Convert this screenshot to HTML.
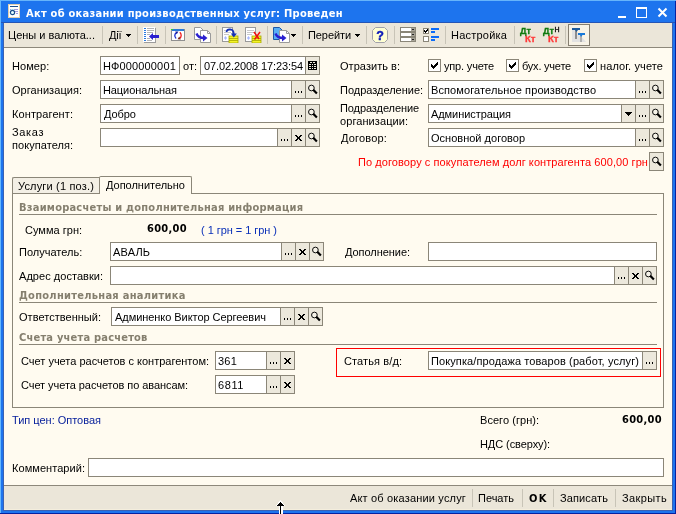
<!DOCTYPE html><html lang="ru"><head><meta charset="utf-8"><title>Акт об оказании производственных услуг</title><style>

html,body{margin:0;padding:0}
body{width:676px;height:514px;overflow:hidden;background:#1d74ee;position:relative;font-family:"Liberation Sans", sans-serif;font-size:11px;color:#000}
div,span,svg{position:absolute;box-sizing:border-box}
.t{white-space:pre;line-height:13px;height:13px}
.b{font-weight:bold;font-family:"DejaVu Sans Condensed","Liberation Sans",sans-serif} .w{color:#fff} .r{color:#ff0000} .g{color:#857f6e} .bl{color:#0a30b8} .bl2{color:#0a229c}
.in{background:#fff;border:1px solid #8b8678;height:19px}
.bt{background:#ece8dc;border-left:1px solid #8b8678;width:14px;height:17px;top:0}
.sep{width:1px;background:#c8c4b7}
.hl{height:1px;background:#8b8678}
.cb{width:13px;height:13px;background:#fff;border:1px solid #8b8678}

</style></head><body>
<div id="tx" style="left:0;top:0;width:676px;height:514px;will-change:transform">
<div style="left:0;top:0;width:676px;height:23px;background:#1d74ee"></div>
<div style="left:0;top:0;width:676px;height:1px;background:#66b4fb"></div>
<div style="left:0;top:22px;width:676px;height:1px;background:#2455b5"></div>
<div style="left:0;top:1px;width:1px;height:513px;background:#66b8fd"></div>
<div style="left:3px;top:23px;width:1px;height:488px;background:#3a62b2"></div>
<div style="left:672px;top:23px;width:1px;height:488px;background:#3a62b2"></div>
<div style="left:3px;top:510px;width:670px;height:1px;background:#3a62b2"></div>
<div style="left:675px;top:1px;width:1px;height:513px;background:#0422a2"></div>
<div style="left:0;top:513px;width:676px;height:1px;background:#0422a2"></div>
<div style="left:4px;top:23px;width:668px;height:487px;background:#fffbf0"></div>
<div style="left:4px;top:23px;width:668px;height:24px;background:#ebe6d9"></div>
<div style="left:4px;top:47px;width:668px;height:1px;background:#8d887b"></div>
<div style="left:4px;top:485px;width:668px;height:1px;background:#8d887b"></div>
<div style="left:4px;top:486px;width:668px;height:24px;background:#ebe6d9"></div>
<div style="left:4px;top:509px;width:668px;height:1px;background:#f4eedd"></div>
<svg style="left:8px;top:4px" width="12" height="14" viewBox="0 0 12 14"><rect x="0.5" y="0.5" width="11" height="13" fill="#fff" stroke="#e2cfae"/><rect x="2" y="2" width="8" height="1" fill="#1c4f8c"/><rect x="2" y="5" width="1" height="1" fill="#a098e0"/><rect x="3" y="5" width="3" height="1" fill="#b8f0f0"/><rect x="6" y="5" width="4" height="1" fill="#a098e0"/><rect x="7" y="7" width="3" height="1" fill="#a098e0"/><rect x="8" y="9" width="2" height="1" fill="#a098e0"/><circle cx="4.5" cy="8.5" r="2.1" fill="#e8ffff" stroke="#1c4f8c" stroke-width="1.2"/></svg>
<div style="left:618px;top:16px;width:8px;height:2px;background:#fff"></div>
<div style="left:636px;top:7px;width:11px;height:11px;border:1px solid #fff;border-top-width:2px"></div>
<svg style="left:657px;top:7px" width="11" height="11" viewBox="0 0 11 11"><path d="M1.5 1.5 L9.5 9.5 M9.5 1.5 L1.5 9.5" stroke="#fff" stroke-width="2"/></svg>
<div class="sep" style="left:102px;top:26px;height:18px"></div>
<div class="sep" style="left:137px;top:26px;height:18px"></div>
<div class="sep" style="left:165px;top:26px;height:18px"></div>
<div class="sep" style="left:216px;top:26px;height:18px"></div>
<div class="sep" style="left:267px;top:26px;height:18px"></div>
<div class="sep" style="left:302px;top:26px;height:18px"></div>
<div class="sep" style="left:366px;top:26px;height:18px"></div>
<div class="sep" style="left:394px;top:26px;height:18px"></div>
<div class="sep" style="left:445px;top:26px;height:18px"></div>
<div class="sep" style="left:514px;top:26px;height:18px"></div>
<div class="sep" style="left:565px;top:26px;height:18px"></div>
<svg style="left:126px;top:34px" width="5" height="3" viewBox="0 0 5 3" shape-rendering="crispEdges"><polygon points="0,0 5,0 2.5,3" fill="#000"/></svg>
<svg style="left:291px;top:34px" width="5" height="3" viewBox="0 0 5 3" shape-rendering="crispEdges"><polygon points="0,0 5,0 2.5,3" fill="#000"/></svg>
<svg style="left:355px;top:34px" width="5" height="3" viewBox="0 0 5 3" shape-rendering="crispEdges"><polygon points="0,0 5,0 2.5,3" fill="#000"/></svg>
<svg style="left:143px;top:27px" width="17" height="16" viewBox="0 0 17 16" shape-rendering="crispEdges"><rect x="1" y="1" width="12" height="15" fill="#9c9c9c"/><rect x="0" y="0" width="12" height="15" fill="#fff"/><g fill="#2a7be0"><rect x="1" y="1" width="2" height="1"/><rect x="1" y="3" width="2" height="1"/><rect x="1" y="5" width="2" height="1"/><rect x="1" y="7" width="2" height="1"/><rect x="1" y="9" width="2" height="1"/><rect x="1" y="11" width="2" height="1"/><rect x="1" y="13" width="2" height="1"/></g><g fill="#b4b4b4"><rect x="4" y="1" width="7" height="1"/><rect x="4" y="3" width="7" height="1"/><rect x="4" y="5" width="6" height="1"/><rect x="4" y="7" width="3" height="1"/><rect x="4" y="11" width="3" height="1"/><rect x="4" y="13" width="5" height="1"/></g><polygon points="6,9.5 10,6 10,8 16,8 16,11 10,11 10,13" fill="#2a1fd0" shape-rendering="auto"/></svg>
<svg style="left:171px;top:29px" width="14" height="12" viewBox="0 0 14 12"><rect x="0.5" y="0.5" width="13" height="11" fill="#fff" stroke="#909090"/><rect x="1" y="0" width="12" height="2" fill="#2b7ad6"/><rect x="0" y="0" width="2" height="1" fill="#30d030"/><path d="M5.6 3.6 C3.4 4.6 3.2 8 5.2 9.6" fill="none" stroke="#1626cc" stroke-width="1.3"/><polygon points="4.2,2.4 7.4,2.6 5.8,5.2" fill="#101898"/><path d="M8.4 9.4 C10.6 8.4 10.8 5 8.8 3.2" fill="none" stroke="#f01818" stroke-width="1.3"/><polygon points="9.8,10.4 6.6,10.2 8.2,7.6" fill="#7a2a18"/></svg>
<svg style="left:194px;top:27px" width="17" height="16" viewBox="0 0 17 16"><path d="M0.5 0.5 H6.5 L9.5 3.5 V12.5 H0.5 Z" fill="#fff" stroke="#9a9a9a"/><path d="M6.5 3.5 H13.5 L16.5 6.5 V15.5 H6.5 Z" fill="#fff" stroke="#9a9a9a"/><path d="M13.5 3.5 V6.5 H16.5" fill="none" stroke="#9a9a9a"/><path d="M2.5 6.5 C4 10.5 7 11 10 11" fill="none" stroke="#2a1fd0" stroke-width="2.4"/><polygon points="9,7.5 13.5,11 9,14.5" fill="#2a1fd0"/></svg>
<svg style="left:222px;top:27px" width="17" height="16" viewBox="0 0 17 16"><rect x="0.5" y="0.5" width="10" height="14" fill="#fff" stroke="#9a9a9a"/><g fill="#c8c8c8"><rect x="2" y="3" width="7" height="1"/><rect x="2" y="5" width="7" height="1"/><rect x="2" y="7" width="5" height="1"/></g><polygon points="3.5,9 5,11 3.5,13 2,11" fill="#a8b8ff"/><rect x="7" y="9" width="9" height="7" fill="#f4f428" stroke="#a8a800" stroke-width="0.8"/><g fill="#a8a800"><rect x="7" y="11" width="9" height="0.8"/><rect x="7" y="13" width="9" height="0.8"/></g><path d="M4.5 5 C5 1.5 11.5 1 11.8 7" fill="none" stroke="#1430b8" stroke-width="1.7"/><polygon points="8.8,6.6 14.8,6.6 11.8,10.6" fill="#1430b8"/></svg>
<svg style="left:245px;top:27px" width="17" height="16" viewBox="0 0 17 16"><rect x="0.5" y="0.5" width="10" height="14" fill="#fff" stroke="#9a9a9a"/><g fill="#c8c8c8"><rect x="2" y="3" width="7" height="1"/><rect x="2" y="5" width="7" height="1"/><rect x="2" y="7" width="5" height="1"/></g><polygon points="3.5,9 5,11 3.5,13 2,11" fill="#a8b8ff"/><rect x="7" y="9" width="9" height="7" fill="#f4f428" stroke="#a8a800" stroke-width="0.8"/><g fill="#a8a800"><rect x="7" y="11" width="9" height="0.8"/><rect x="7" y="13" width="9" height="0.8"/></g><path d="M9 5 L14 12 M15 5 L9.5 12.5" fill="none" stroke="#f01010" stroke-width="1.5"/></svg>
<svg style="left:273px;top:27px" width="17" height="16" viewBox="0 0 17 16"><path d="M0.5 0.5 H6.5 L9.5 3.5 V12.5 H0.5 Z" fill="#58aef4" stroke="#1c58a8"/><path d="M6.5 3.5 H13.5 L16.5 6.5 V15.5 H6.5 Z" fill="#fff" stroke="#9a9a9a"/><path d="M13.5 3.5 V6.5 H16.5" fill="none" stroke="#9a9a9a"/><path d="M2.5 6.5 C4 10.5 7 11 10 11" fill="none" stroke="#2a1fd0" stroke-width="2.4"/><polygon points="9,7.5 13.5,11 9,14.5" fill="#2a1fd0"/></svg>
<svg style="left:372px;top:27px" width="16" height="16" viewBox="0 0 16 16"><polygon points="3.5,0.5 12.5,0.5 15.5,3.5 15.5,12.5 12.5,15.5 3.5,15.5 0.5,12.5 0.5,3.5" fill="#ffffd2" stroke="#a2a2aa"/><text x="8" y="12.6" text-anchor="middle" font-family="Liberation Sans, sans-serif" font-weight="bold" font-size="12.5" fill="#0818b8" stroke="#0818b8" stroke-width="0.4">?</text></svg>
<svg style="left:400px;top:27px" width="16" height="15" viewBox="0 0 16 15" shape-rendering="crispEdges"><g fill="#fff" stroke="#8a8678"><rect x="0.5" y="0.5" width="15" height="4"/><rect x="0.5" y="5.5" width="15" height="4"/><rect x="0.5" y="10.5" width="15" height="4"/></g><g fill="#a8a498"><rect x="11" y="1" width="4" height="3"/><rect x="11" y="6" width="4" height="3"/><rect x="11" y="11" width="4" height="3"/></g><g fill="#222"><rect x="12" y="2" width="2" height="1"/><rect x="12" y="7" width="2" height="1"/><rect x="12" y="12" width="2" height="1"/></g></svg>
<svg style="left:423px;top:28px" width="17" height="14" viewBox="0 0 17 14" shape-rendering="crispEdges"><rect x="0.5" y="0.5" width="5" height="5" fill="#fff" stroke="#8a8678"/><path d="M1 2h1v1h1v-1h1v-1h1v2h-1v1h-1v1h-1v-1h-1z" fill="#000"/><rect x="0.5" y="8.5" width="5" height="5" fill="#fff" stroke="#8a8678"/><g fill="#0c6cf8"><rect x="8" y="0" width="8" height="2"/><rect x="8" y="3" width="4" height="2"/><rect x="8" y="8" width="8" height="2"/><rect x="8" y="11" width="4" height="2"/></g></svg>
<svg style="left:518px;top:25px" width="44" height="20" viewBox="0 0 44 20"><g font-family="Liberation Sans, sans-serif" font-weight="bold" font-size="8.6"><text x="2" y="8.6" fill="#0f7a0f" stroke="#0f7a0f" stroke-width="0.3" textLength="11" lengthAdjust="spacingAndGlyphs">Дт</text><text x="7" y="16.8" fill="#ff3a3a" stroke="#ff3a3a" stroke-width="0.3" textLength="10.5" lengthAdjust="spacingAndGlyphs">Кт</text><text x="25" y="8.6" fill="#0f7a0f" stroke="#0f7a0f" stroke-width="0.3" textLength="11" lengthAdjust="spacingAndGlyphs">Дт</text><text x="30" y="16.8" fill="#ff3a3a" stroke="#ff3a3a" stroke-width="0.3" textLength="10.5" lengthAdjust="spacingAndGlyphs">Кт</text><text x="36.6" y="6.8" fill="#000" font-size="7" font-weight="normal" stroke="#000" stroke-width="0.3">Н</text></g></svg>
<div style="left:568px;top:24px;width:22px;height:22px;border:1px solid #857e70;background:#f8f3e6"></div>
<svg style="left:571px;top:27px" width="16" height="16" viewBox="0 0 16 16"><polygon points="1,2 1,15 15,15 9,8 9,9 5,3" fill="#e2e2e2"/><rect x="4" y="3" width="2" height="9" fill="#8e8e8e"/><rect x="9" y="8" width="2" height="7" fill="#b0b0b0"/><polygon points="1,1 9,1 9,3 7,3 5.5,5 4,3 1,3" fill="#1c5a9c"/><polygon points="7,6 14,6 14,8 11.5,8 10,10 9,8 7,8" fill="#1878d8"/></svg>

<div class="in" style="left:100px;top:56px;width:80px"></div>
<div class="in" style="left:200px;top:56px;width:120px"><div class="bt" style="left:104px"><svg style="left:0;top:0" width="13" height="17" viewBox="0 0 13 17" shape-rendering="crispEdges"><rect x="2" y="4" width="9" height="9" fill="#000"/><rect x="4" y="5" width="2" height="1" fill="#ece8dc"/><rect x="7" y="5" width="2" height="1" fill="#ece8dc"/><rect x="3" y="7" width="2" height="1" fill="#ece8dc"/><rect x="6" y="7" width="1" height="1" fill="#ece8dc"/><rect x="8" y="7" width="2" height="1" fill="#ece8dc"/><rect x="3" y="9" width="2" height="1" fill="#ece8dc"/><rect x="6" y="9" width="1" height="1" fill="#ece8dc"/><rect x="8" y="9" width="2" height="1" fill="#ece8dc"/><rect x="3" y="11" width="2" height="1" fill="#ece8dc"/><rect x="6" y="11" width="1" height="1" fill="#ece8dc"/><rect x="8" y="11" width="2" height="1" fill="#ece8dc"/></svg></div></div>
<div class="in" style="left:100px;top:80px;width:220px"><div class="bt" style="left:190px"><svg style="left:0;top:0" width="13" height="17" viewBox="0 0 13 17" shape-rendering="crispEdges"><rect x="3" y="10" width="1" height="2"/><rect x="6" y="10" width="1" height="2"/><rect x="9" y="10" width="1" height="2"/></svg></div><div class="bt" style="left:204px"><svg style="left:0;top:0" width="13" height="17" viewBox="0 0 13 17"><circle cx="5.4" cy="7" r="2.85" fill="#f5f2e8" stroke="#000" stroke-width="0.95"/><path d="M8 9.6 L10.1 11.7" stroke="#000" stroke-width="2.2" stroke-linecap="square"/></svg></div></div>
<div class="in" style="left:100px;top:104px;width:220px"><div class="bt" style="left:190px"><svg style="left:0;top:0" width="13" height="17" viewBox="0 0 13 17" shape-rendering="crispEdges"><rect x="3" y="10" width="1" height="2"/><rect x="6" y="10" width="1" height="2"/><rect x="9" y="10" width="1" height="2"/></svg></div><div class="bt" style="left:204px"><svg style="left:0;top:0" width="13" height="17" viewBox="0 0 13 17"><circle cx="5.4" cy="7" r="2.85" fill="#f5f2e8" stroke="#000" stroke-width="0.95"/><path d="M8 9.6 L10.1 11.7" stroke="#000" stroke-width="2.2" stroke-linecap="square"/></svg></div></div>
<div class="in" style="left:100px;top:128px;width:220px"><div class="bt" style="left:176px"><svg style="left:0;top:0" width="13" height="17" viewBox="0 0 13 17" shape-rendering="crispEdges"><rect x="3" y="10" width="1" height="2"/><rect x="6" y="10" width="1" height="2"/><rect x="9" y="10" width="1" height="2"/></svg></div><div class="bt" style="left:190px"><svg style="left:0;top:0" width="13" height="17" viewBox="0 0 13 17" shape-rendering="crispEdges"><path d="M3 6h2v1h1v1h1v-1h1v-1h2v1h-1v1h-1v2h1v1h1v1h-2v-1h-1v-1h-1v1h-1v1h-2v-1h1v-1h1v-2h-1v-1h-1z"/></svg></div><div class="bt" style="left:204px"><svg style="left:0;top:0" width="13" height="17" viewBox="0 0 13 17"><circle cx="5.4" cy="7" r="2.85" fill="#f5f2e8" stroke="#000" stroke-width="0.95"/><path d="M8 9.6 L10.1 11.7" stroke="#000" stroke-width="2.2" stroke-linecap="square"/></svg></div></div>
<div class="in" style="left:428px;top:80px;width:236px"><div class="bt" style="left:206px"><svg style="left:0;top:0" width="13" height="17" viewBox="0 0 13 17" shape-rendering="crispEdges"><rect x="3" y="10" width="1" height="2"/><rect x="6" y="10" width="1" height="2"/><rect x="9" y="10" width="1" height="2"/></svg></div><div class="bt" style="left:220px"><svg style="left:0;top:0" width="13" height="17" viewBox="0 0 13 17"><circle cx="5.4" cy="7" r="2.85" fill="#f5f2e8" stroke="#000" stroke-width="0.95"/><path d="M8 9.6 L10.1 11.7" stroke="#000" stroke-width="2.2" stroke-linecap="square"/></svg></div></div>
<div class="in" style="left:428px;top:104px;width:236px"><div class="bt" style="left:192px"><svg style="left:0;top:0" width="13" height="17" viewBox="0 0 13 17" shape-rendering="crispEdges"><rect x="3" y="7" width="7" height="1"/><rect x="4" y="8" width="5" height="1"/><rect x="5" y="9" width="3" height="1"/><rect x="6" y="10" width="1" height="1"/></svg></div><div class="bt" style="left:206px"><svg style="left:0;top:0" width="13" height="17" viewBox="0 0 13 17" shape-rendering="crispEdges"><rect x="3" y="10" width="1" height="2"/><rect x="6" y="10" width="1" height="2"/><rect x="9" y="10" width="1" height="2"/></svg></div><div class="bt" style="left:220px"><svg style="left:0;top:0" width="13" height="17" viewBox="0 0 13 17"><circle cx="5.4" cy="7" r="2.85" fill="#f5f2e8" stroke="#000" stroke-width="0.95"/><path d="M8 9.6 L10.1 11.7" stroke="#000" stroke-width="2.2" stroke-linecap="square"/></svg></div></div>
<div class="in" style="left:428px;top:128px;width:236px"><div class="bt" style="left:206px"><svg style="left:0;top:0" width="13" height="17" viewBox="0 0 13 17" shape-rendering="crispEdges"><rect x="3" y="10" width="1" height="2"/><rect x="6" y="10" width="1" height="2"/><rect x="9" y="10" width="1" height="2"/></svg></div><div class="bt" style="left:220px"><svg style="left:0;top:0" width="13" height="17" viewBox="0 0 13 17"><circle cx="5.4" cy="7" r="2.85" fill="#f5f2e8" stroke="#000" stroke-width="0.95"/><path d="M8 9.6 L10.1 11.7" stroke="#000" stroke-width="2.2" stroke-linecap="square"/></svg></div></div>
<div class="in" style="left:649px;top:152px;width:15px;background:#ece8dc"><svg style="left:0;top:0" width="13" height="17" viewBox="0 0 13 17"><circle cx="5.4" cy="7" r="2.85" fill="#f5f2e8" stroke="#000" stroke-width="0.95"/><path d="M8 9.6 L10.1 11.7" stroke="#000" stroke-width="2.2" stroke-linecap="square"/></svg></div>
<div class="cb" style="left:428px;top:59px"><svg style="left:2px;top:2px" width="7" height="7" viewBox="0 0 7 7" shape-rendering="crispEdges"><path d="M0 2v3h1v1h1v1h1v-1h1v-1h1v-1h1v-1h1v-3h-1v1h-1v1h-1v1h-1v1h-1v-1h-1v-1z"/></svg></div>
<div class="cb" style="left:506px;top:59px"><svg style="left:2px;top:2px" width="7" height="7" viewBox="0 0 7 7" shape-rendering="crispEdges"><path d="M0 2v3h1v1h1v1h1v-1h1v-1h1v-1h1v-1h1v-3h-1v1h-1v1h-1v1h-1v1h-1v-1h-1v-1z"/></svg></div>
<div class="cb" style="left:584px;top:59px"><svg style="left:2px;top:2px" width="7" height="7" viewBox="0 0 7 7" shape-rendering="crispEdges"><path d="M0 2v3h1v1h1v1h1v-1h1v-1h1v-1h1v-1h1v-3h-1v1h-1v1h-1v1h-1v1h-1v-1h-1v-1z"/></svg></div>
<div style="left:12px;top:193px;width:652px;height:215px;border:1px solid #8b8678"></div>
<div style="left:12px;top:177px;width:88px;height:17px;border:1px solid #8b8678;border-right:0;background:#f3efe5;border-top-left-radius:2px"></div>
<div style="left:99px;top:176px;width:93px;height:18px;border:1px solid #8b8678;border-bottom:0;background:#fffbf0;border-top-left-radius:2px;border-top-right-radius:2px"></div>
<div class="hl" style="left:19px;top:214px;width:638px"></div>
<div class="hl" style="left:19px;top:302px;width:638px"></div>
<div class="hl" style="left:19px;top:344px;width:638px"></div>
<div class="in" style="left:110px;top:242px;width:214px"><div class="bt" style="left:170px"><svg style="left:0;top:0" width="13" height="17" viewBox="0 0 13 17" shape-rendering="crispEdges"><rect x="3" y="10" width="1" height="2"/><rect x="6" y="10" width="1" height="2"/><rect x="9" y="10" width="1" height="2"/></svg></div><div class="bt" style="left:184px"><svg style="left:0;top:0" width="13" height="17" viewBox="0 0 13 17" shape-rendering="crispEdges"><path d="M3 6h2v1h1v1h1v-1h1v-1h2v1h-1v1h-1v2h1v1h1v1h-2v-1h-1v-1h-1v1h-1v1h-2v-1h1v-1h1v-2h-1v-1h-1z"/></svg></div><div class="bt" style="left:198px"><svg style="left:0;top:0" width="13" height="17" viewBox="0 0 13 17"><circle cx="5.4" cy="7" r="2.85" fill="#f5f2e8" stroke="#000" stroke-width="0.95"/><path d="M8 9.6 L10.1 11.7" stroke="#000" stroke-width="2.2" stroke-linecap="square"/></svg></div></div>
<div class="in" style="left:428px;top:242px;width:229px"></div>
<div class="in" style="left:110px;top:266px;width:547px"><div class="bt" style="left:503px"><svg style="left:0;top:0" width="13" height="17" viewBox="0 0 13 17" shape-rendering="crispEdges"><rect x="3" y="10" width="1" height="2"/><rect x="6" y="10" width="1" height="2"/><rect x="9" y="10" width="1" height="2"/></svg></div><div class="bt" style="left:517px"><svg style="left:0;top:0" width="13" height="17" viewBox="0 0 13 17" shape-rendering="crispEdges"><path d="M3 6h2v1h1v1h1v-1h1v-1h2v1h-1v1h-1v2h1v1h1v1h-2v-1h-1v-1h-1v1h-1v1h-2v-1h1v-1h1v-2h-1v-1h-1z"/></svg></div><div class="bt" style="left:531px"><svg style="left:0;top:0" width="13" height="17" viewBox="0 0 13 17"><circle cx="5.4" cy="7" r="2.85" fill="#f5f2e8" stroke="#000" stroke-width="0.95"/><path d="M8 9.6 L10.1 11.7" stroke="#000" stroke-width="2.2" stroke-linecap="square"/></svg></div></div>
<div class="in" style="left:111px;top:307px;width:212px"><div class="bt" style="left:168px"><svg style="left:0;top:0" width="13" height="17" viewBox="0 0 13 17" shape-rendering="crispEdges"><rect x="3" y="10" width="1" height="2"/><rect x="6" y="10" width="1" height="2"/><rect x="9" y="10" width="1" height="2"/></svg></div><div class="bt" style="left:182px"><svg style="left:0;top:0" width="13" height="17" viewBox="0 0 13 17" shape-rendering="crispEdges"><path d="M3 6h2v1h1v1h1v-1h1v-1h2v1h-1v1h-1v2h1v1h1v1h-2v-1h-1v-1h-1v1h-1v1h-2v-1h1v-1h1v-2h-1v-1h-1z"/></svg></div><div class="bt" style="left:196px"><svg style="left:0;top:0" width="13" height="17" viewBox="0 0 13 17"><circle cx="5.4" cy="7" r="2.85" fill="#f5f2e8" stroke="#000" stroke-width="0.95"/><path d="M8 9.6 L10.1 11.7" stroke="#000" stroke-width="2.2" stroke-linecap="square"/></svg></div></div>
<div class="in" style="left:215px;top:351px;width:80px"><div class="bt" style="left:50px"><svg style="left:0;top:0" width="13" height="17" viewBox="0 0 13 17" shape-rendering="crispEdges"><rect x="3" y="10" width="1" height="2"/><rect x="6" y="10" width="1" height="2"/><rect x="9" y="10" width="1" height="2"/></svg></div><div class="bt" style="left:64px"><svg style="left:0;top:0" width="13" height="17" viewBox="0 0 13 17" shape-rendering="crispEdges"><path d="M3 6h2v1h1v1h1v-1h1v-1h2v1h-1v1h-1v2h1v1h1v1h-2v-1h-1v-1h-1v1h-1v1h-2v-1h1v-1h1v-2h-1v-1h-1z"/></svg></div></div>
<div class="in" style="left:215px;top:375px;width:80px"><div class="bt" style="left:50px"><svg style="left:0;top:0" width="13" height="17" viewBox="0 0 13 17" shape-rendering="crispEdges"><rect x="3" y="10" width="1" height="2"/><rect x="6" y="10" width="1" height="2"/><rect x="9" y="10" width="1" height="2"/></svg></div><div class="bt" style="left:64px"><svg style="left:0;top:0" width="13" height="17" viewBox="0 0 13 17" shape-rendering="crispEdges"><path d="M3 6h2v1h1v1h1v-1h1v-1h2v1h-1v1h-1v2h1v1h1v1h-2v-1h-1v-1h-1v1h-1v1h-2v-1h1v-1h1v-2h-1v-1h-1z"/></svg></div></div>
<div style="left:336px;top:348px;width:325px;height:29px;border:1px solid #ff0000"></div>
<div class="in" style="left:428px;top:351px;width:229px"><div class="bt" style="left:213px"><svg style="left:0;top:0" width="13" height="17" viewBox="0 0 13 17" shape-rendering="crispEdges"><rect x="3" y="10" width="1" height="2"/><rect x="6" y="10" width="1" height="2"/><rect x="9" y="10" width="1" height="2"/></svg></div></div>
<div class="in" style="left:88px;top:458px;width:576px"></div>
<div class="sep" style="left:472px;top:489px;height:18px"></div>
<div class="sep" style="left:522px;top:489px;height:18px"></div>
<div class="sep" style="left:553px;top:489px;height:18px"></div>
<div class="sep" style="left:615px;top:489px;height:18px"></div>
<svg style="left:275px;top:500px" width="11" height="14" viewBox="0 0 11 14" shape-rendering="crispEdges"><polygon points="5.5,0 10.5,6 7.5,6 7.5,14 3.5,14 3.5,6 0.5,6" fill="#fff"/><polygon points="5.5,1.5 9,5.5 2,5.5" fill="#000"/><rect x="5" y="5" width="1" height="9" fill="#000"/></svg>
<span id="t0" class="t b w" style="left:26px;top:7px;letter-spacing:0.261px">Акт об оказании производственных услуг: Проведен</span>
<span id="t1" class="t " style="left:8px;top:29px;letter-spacing:0.002px">Цены и валюта...</span>
<span id="t2" class="t " style="left:109px;top:29px;letter-spacing:-0.151px">Дії</span>
<span id="t3" class="t " style="left:308px;top:29px;letter-spacing:-0.085px">Перейти</span>
<span id="t4" class="t " style="left:451px;top:29px;letter-spacing:0.219px">Настройка</span>
<span id="t5" class="t " style="left:12px;top:60px;letter-spacing:0.080px">Номер:</span>
<span id="t6" class="t " style="left:12px;top:84px;letter-spacing:0.057px">Организация:</span>
<span id="t7" class="t " style="left:12px;top:108px;letter-spacing:0.106px">Контрагент:</span>
<span id="t8" class="t " style="left:12px;top:126px;letter-spacing:0.678px">Заказ</span>
<span id="t9" class="t " style="left:12px;top:139px;letter-spacing:0.059px">покупателя:</span>
<span id="t10" class="t " style="left:183px;top:60px;letter-spacing:0.005px">от:</span>
<span id="t11" class="t " style="left:103px;top:60px;letter-spacing:0.139px">НФ000000001</span>
<span id="t12" class="t " style="left:204px;top:60px;letter-spacing:-0.102px">07.02.2008 17:23:54</span>
<span id="t13" class="t " style="left:103px;top:84px;letter-spacing:-0.094px">Национальная</span>
<span id="t14" class="t " style="left:104px;top:108px;letter-spacing:-0.097px">Добро</span>
<span id="t15" class="t " style="left:340px;top:60px;letter-spacing:0.043px">Отразить в:</span>
<span id="t16" class="t " style="left:444px;top:60px;letter-spacing:-0.170px">упр. учете</span>
<span id="t17" class="t " style="left:522px;top:60px;letter-spacing:-0.219px">бух. учете</span>
<span id="t18" class="t " style="left:600px;top:60px;letter-spacing:0.120px">налог. учете</span>
<span id="t19" class="t " style="left:340px;top:84px;letter-spacing:-0.010px">Подразделение:</span>
<span id="t20" class="t " style="left:340px;top:102px;letter-spacing:-0.089px">Подразделение</span>
<span id="t21" class="t " style="left:340px;top:115px;letter-spacing:0.078px">организации:</span>
<span id="t22" class="t " style="left:341px;top:132px;letter-spacing:0.176px">Договор:</span>
<span id="t23" class="t " style="left:431px;top:84px;letter-spacing:0.105px">Вспомогательное производство</span>
<span id="t24" class="t " style="left:431px;top:108px;letter-spacing:-0.072px">Администрация</span>
<span id="t25" class="t " style="left:431px;top:132px;letter-spacing:0.012px">Основной договор</span>
<span id="t26" class="t r" style="left:358px;top:156px;letter-spacing:0.080px">По договору с покупателем долг контрагента 600,00 грн</span>
<span id="t27" class="t " style="left:18px;top:180px;letter-spacing:0.176px">Услуги (1 поз.)</span>
<span id="t28" class="t " style="left:106px;top:179px;letter-spacing:-0.019px">Дополнительно</span>
<span id="t29" class="t b g" style="left:19px;top:201px;letter-spacing:0.227px">Взаиморасчеты и дополнительная информация</span>
<span id="t30" class="t " style="left:25px;top:224px;letter-spacing:0.022px">Сумма грн:</span>
<span id="t31" class="t b" style="left:147px;top:222px;letter-spacing:0.291px">600,00</span>
<span id="t32" class="t bl" style="left:201px;top:224px;letter-spacing:-0.044px">( 1 грн = 1 грн )</span>
<span id="t33" class="t " style="left:19px;top:246px;letter-spacing:0.001px">Получатель:</span>
<span id="t34" class="t " style="left:113px;top:246px;letter-spacing:0.184px">АВАЛЬ</span>
<span id="t35" class="t " style="left:345px;top:246px;letter-spacing:-0.048px">Дополнение:</span>
<span id="t36" class="t " style="left:19px;top:270px;letter-spacing:0.040px">Адрес доставки:</span>
<span id="t37" class="t b g" style="left:19px;top:289px;letter-spacing:0.276px">Дополнительная аналитика</span>
<span id="t38" class="t " style="left:19px;top:311px;letter-spacing:0.032px">Ответственный:</span>
<span id="t39" class="t " style="left:115px;top:311px;letter-spacing:-0.056px">Админенко Виктор Сергеевич</span>
<span id="t40" class="t b g" style="left:19px;top:331px;letter-spacing:0.209px">Счета учета расчетов</span>
<span id="t41" class="t " style="left:21px;top:355px;letter-spacing:-0.002px">Счет учета расчетов с контрагентом:</span>
<span id="t42" class="t " style="left:218px;top:355px;letter-spacing:0.214px">361</span>
<span id="t43" class="t " style="left:21px;top:379px;letter-spacing:-0.061px">Счет учета расчетов по авансам:</span>
<span id="t44" class="t " style="left:218px;top:379px;letter-spacing:0.586px">6811</span>
<span id="t45" class="t " style="left:344px;top:355px;letter-spacing:0.110px">Статья в/д:</span>
<span id="t46" class="t " style="left:431px;top:355px;letter-spacing:0.102px">Покупка/продажа товаров (работ, услуг)</span>
<span id="t47" class="t bl2" style="left:12px;top:414px;letter-spacing:-0.015px">Тип цен: Оптовая</span>
<span id="t48" class="t " style="left:480px;top:414px;letter-spacing:0.049px">Всего (грн):</span>
<span id="t49" class="t b" style="left:622px;top:413px;letter-spacing:0.291px">600,00</span>
<span id="t50" class="t " style="left:480px;top:438px;letter-spacing:-0.079px">НДС (сверху):</span>
<span id="t51" class="t " style="left:12px;top:462px;letter-spacing:0.062px">Комментарий:</span>
<span id="t52" class="t " style="left:350px;top:492px;letter-spacing:0.174px">Акт об оказании услуг</span>
<span id="t53" class="t " style="left:478px;top:492px;letter-spacing:-0.008px">Печать</span>
<span id="t54" class="t b" style="left:529px;top:492px;letter-spacing:1.250px">OK</span>
<span id="t55" class="t " style="left:560px;top:492px;letter-spacing:0.123px">Записать</span>
<span id="t56" class="t " style="left:622px;top:492px;letter-spacing:0.398px">Закрыть</span>
</div>
</body></html>
